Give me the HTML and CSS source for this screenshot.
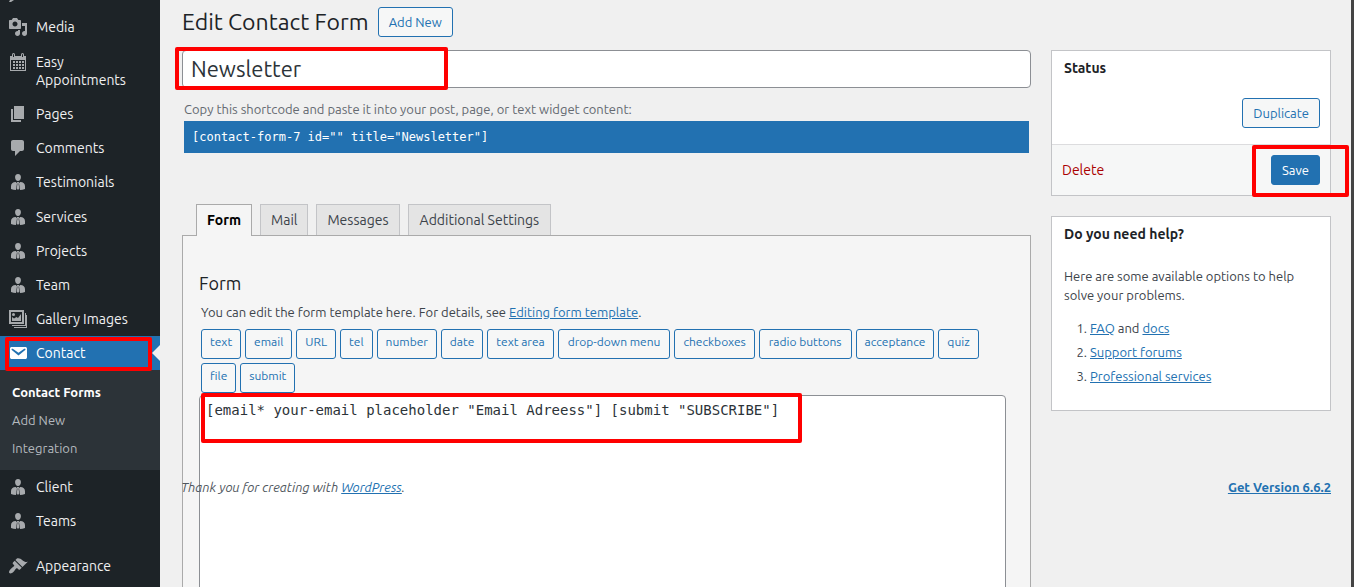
FILE: index.html
```html
<!DOCTYPE html>
<html lang="en">
<head>
<meta charset="utf-8">
<title>Edit Contact Form</title>
<link rel="stylesheet" href="styles.css">
</head>
<body>
<svg class="sprite" aria-hidden="true">
  <symbol id="media" viewBox="0 0 20 20"><path fill-rule="evenodd" d="M13 11V4c0-.55-.45-1-1-1h-1.670L9 1H5L3.670 3H2c-.55 0-1 .45-1 1v7c0 .55.45 1 1 1h10c.55 0 1-.45 1-1zM7 4.500c1.380 0 2.500 1.120 2.500 2.500S8.380 9.500 7 9.500 4.500 8.380 4.500 7 5.620 4.500 7 4.500zM14 6h5v10.500c0 1.380-1.120 2.500-2.500 2.500S14 17.880 14 16.500s1.120-2.500 2.500-2.500c.17 0 .34.02.5.05V9h-3V6zm-4 8.050V13h2v3.500c0 1.380-1.120 2.500-2.500 2.500S7 17.880 7 16.500 8.120 14 9.500 14c.17 0 .34.02.5.050z"/></symbol>
  <symbol id="calendar" viewBox="0 0 20 20"><path fill-rule="evenodd" d="M2 4h2V2.500a1.500 1.500 0 0 1 3 0V4h6V2.500a1.500 1.500 0 0 1 3 0V4h2v15H2zM5 2.200V5h1V2.200zM14 2.200V5h1V2.200zM3 8v10h14V8z"/><path d="M5 9h2v2H5zM8 9h2v2H8zM11 9h2v2h-2zM14 9h2v2h-2zM5 12h2v2H5zM8 12h2v2H8zM11 12h2v2h-2zM14 12h2v2h-2zM5 15h2v2H5zM8 15h2v2H8zM11 15h2v2h-2zM14 15h2v2h-2z"/></symbol>
  <symbol id="page" viewBox="0 0 20 20"><path d="M6 15V2h10v13H6zm-1 1h8v2H3V5h2v11z"/></symbol>
  <symbol id="comment" viewBox="0 0 20 20"><path d="M5 2h9c1.100 0 2 .9 2 2v7c0 1.100-.9 2-2 2h-2l-5 5v-5H5c-1.100 0-2-.9-2-2V4c0-1.100.9-2 2-2z"/></symbol>
  <symbol id="person" viewBox="0 0 20 20"><path d="M10 2c1.900 0 3.100 1.400 2.900 3.500C12.700 7.600 11.700 9 10 9S7.300 7.600 7.100 5.500C6.900 3.400 8.100 2 10 2zM7.800 10 9 11.300 8 17.900c-1.700-.1-3.400-.4-5-1v-2.600C3 11.700 4.600 10 7.800 10zM12.200 10 11 11.300l1 6.600c1.700-.1 3.400-.4 5-1v-2.600c0-2.600-1.600-4.300-4.800-4.300z"/><path d="M9.200 10h1.600l.3 1-.5.800.7 4.700L10 18l-1.300-1.500.7-4.700-.5-.8z"/></symbol>
  <symbol id="gallery" viewBox="0 0 20 20"><path fill-rule="evenodd" d="M1 1h15v14H1zM3 3v10h11V3zM17 4h1v13H4v-1h13zM18 6h1v13H6v-1h12z"/><path d="M4 12V8l2 1.500L8.500 8 10 9l3-4v7z"/><circle cx="5.500" cy="5.500" r="1.500"/></symbol>
  <symbol id="mail" viewBox="0 0 20 20"><path fill-rule="evenodd" d="M3.870 4h13.250C18.370 4 19 4.590 19 5.790v8.420c0 1.190-.63 1.790-1.880 1.790H3.870c-1.250 0-1.880-.6-1.880-1.790V5.790c0-1.200.63-1.790 1.880-1.790zm6.620 8.600 6.740-5.530c.24-.2.43-.66.130-1.070-.29-.41-.82-.42-1.170-.17l-5.700 3.860L4.800 5.830c-.35-.25-.88-.24-1.170.17-.3.410-.11.870.130 1.070z"/></symbol>
  <symbol id="brush" viewBox="0 0 20 20"><path d="M14.480 11.060 7.410 3.990l1.500-1.500c.5-.56 2.300-.47 3.510.32 1.210.8 1.430 1.280 2.910 2.100 1.180.64 2.450 1.260 4.450.85zm-.71.710L6.700 4.700 4.930 6.470c-.39.39-.39 1.020 0 1.410l1.060 1.060c.39.39.39 1.030 0 1.420-.6.6-1.430 1.110-2.210 1.690-.35.26-.7.53-1.010.84C1.430 14.230.4 16.080 1.400 17.070c.99 1 2.840-.03 4.180-1.360.31-.31.58-.66.850-1.020.57-.78 1.080-1.610 1.690-2.210.39-.39 1.020-.39 1.410 0l1.060 1.060c.39.39 1.020.39 1.410 0z"/></symbol>
</svg>
<div class="shell">
  <nav class="sidebar" aria-label="Main menu">
    <svg class="pin-tip" viewBox="0 0 6 2" aria-hidden="true"><path d="M1 0h4L2 2H0z"/></svg>
    <a class="item group-end" href="#"><svg class="icon"><use href="#media"/></svg>Media</a>
    <a class="item" href="#"><svg class="icon"><use href="#calendar"/></svg>Easy Appointments</a>
    <a class="item" href="#"><svg class="icon"><use href="#page"/></svg>Pages</a>
    <a class="item" href="#"><svg class="icon"><use href="#comment"/></svg>Comments</a>
    <a class="item group-end" href="#"><svg class="icon"><use href="#person"/></svg>Testimonials</a>
    <a class="item" href="#"><svg class="icon"><use href="#person"/></svg>Services</a>
    <a class="item" href="#"><svg class="icon"><use href="#person"/></svg>Projects</a>
    <a class="item" href="#"><svg class="icon"><use href="#person"/></svg>Team</a>
    <a class="item" href="#"><svg class="icon"><use href="#gallery"/></svg>Gallery Images</a>
    <a class="item current" href="#"><svg class="icon"><use href="#mail"/></svg>Contact<span class="mark mark-contact"></span></a>
    <div class="submenu">
      <a class="active" href="#">Contact Forms</a>
      <a href="#">Add New</a>
      <a href="#">Integration</a>
    </div>
    <a class="item" href="#"><svg class="icon"><use href="#person"/></svg>Client</a>
    <a class="item" href="#"><svg class="icon"><use href="#person"/></svg>Teams</a>
    <a class="item spaced" href="#"><svg class="icon"><use href="#brush"/></svg>Appearance</a>
  </nav>
  <main class="content">
    <header class="heading">
      <h1>Edit Contact Form</h1>
      <button class="button" type="button">Add New</button>
    </header>
    <div class="columns">
      <section class="editor">
        <div class="title-wrap">
          <input class="title" type="text" aria-label="Form title" value="Newsletter">
          <span class="mark mark-title"></span>
        </div>
        <div class="shortcode">
          <label for="shortcode">Copy this shortcode and paste it into your post, page, or text widget content:</label>
          <input id="shortcode" type="text" readonly value='[contact-form-7 id="" title="Newsletter"]'>
        </div>
        <div class="tabs" role="tablist">
          <button class="tab selected" type="button" role="tab" aria-selected="true">Form</button>
          <button class="tab" type="button" role="tab">Mail</button>
          <button class="tab" type="button" role="tab">Messages</button>
          <button class="tab wide" type="button" role="tab">Additional Settings</button>
        </div>
        <div class="panel">
          <h2>Form</h2>
          <p>You can edit the form template here. For details, see <a href="#">Editing form template</a>.</p>
          <div class="tags">
            <button type="button">text</button>
            <button type="button">email</button>
            <button type="button">URL</button>
            <button type="button">tel</button>
            <button type="button">number</button>
            <button type="button">date</button>
            <button type="button">text area</button>
            <button class="wide" type="button">drop-down menu</button>
            <button type="button">checkboxes</button>
            <button class="wide" type="button">radio buttons</button>
            <button type="button">acceptance</button>
            <button type="button">quiz</button>
            <button type="button">file</button>
            <button type="button">submit</button>
          </div>
          <div class="template">
            <textarea aria-label="Form template" rows="24" spellcheck="false">[email* your-email placeholder "Email Adreess"] [submit "SUBSCRIBE"]</textarea>
            <span class="mark mark-template"></span>
          </div>
        </div>
      </section>
      <aside class="side">
        <section class="box">
          <h3>Status</h3>
          <div class="minor"><button class="button" type="button">Duplicate</button></div>
          <div class="major">
            <a class="delete" href="#">Delete</a>
            <button class="button primary" type="button">Save</button>
            <span class="mark mark-save"></span>
          </div>
        </section>
        <section class="box help">
          <h3>Do you need help?</h3>
          <p>Here are some available options to help solve your problems.</p>
          <ol>
            <li><a href="#">FAQ</a> and <a href="#">docs</a></li>
            <li><a href="#">Support forums</a></li>
            <li><a href="#">Professional services</a></li>
          </ol>
        </section>
      </aside>
    </div>
    <footer class="footer">
      <em>Thank you for creating with <a href="#">WordPress</a>.</em>
      <a class="version" href="#">Get Version 6.6.2</a>
    </footer>
  </main>
</div>
</body>
</html>
```

FILE: styles.css
```css
* { box-sizing: border-box; }

body {
  margin: 0;
  background: #f0f0f0;
  color: #3c434a;
  font: 13px/19px Ubuntu, "Noto Sans", sans-serif;
}

h1, h2, h3, p, ol { margin: 0; }
a { color: #2271b1; }
button, input, textarea { font-family: inherit; }
.sprite { display: none; }

.shell {
  display: flex;
  height: 100vh;
  overflow: hidden;
  border-right: 3px solid #444;
}

/* Sidebar */
.sidebar {
  position: relative;
  flex: 0 0 160px;
  padding-top: 10px;
  background: #1d2327;
}
.pin-tip {
  position: absolute;
  top: 0;
  left: 9px;
  width: 6px;
  height: 2px;
  fill: #a7aaad;
}
.item {
  position: relative;
  display: flex;
  gap: 8px;
  padding: 8px;
  color: #f0f0f1;
  font-size: 14px;
  line-height: 18px;
  text-decoration: none;
}
.icon {
  flex: none;
  width: 20px;
  height: 20px;
  margin: -1px 0;
  fill: #a7aaad;
}
.group-end { margin-bottom: 1px; }
.current { background: #2271b1; color: #fff; }
.current .icon { fill: #fff; }
.current::after {
  content: "";
  position: absolute;
  right: 0;
  top: 9px;
  border: 8px solid transparent;
  border-left: 0;
  border-right-color: #f0f0f0;
}
.spaced { margin-top: 11px; }
.submenu {
  padding: 8px 12px;
  background: #2c3338;
}
.submenu a {
  display: block;
  color: #b4b9be;
  line-height: 28px;
  text-decoration: none;
}
.submenu .active { color: #fff; font-weight: 600; }

/* Highlight frames */
.mark {
  position: absolute;
  border: 4px solid #f00;
  border-radius: 2px;
  pointer-events: none;
}
.mark-contact { inset: 1px 8px -1px 5px; }
.mark-title { top: -3px; left: -7px; width: 273px; height: 43px; }
.mark-template { top: -2px; left: 2px; width: 601px; height: 50px; }
.mark-save { inset: 0 -19px -2px auto; width: 97px; }

/* Content */
.content {
  position: relative;
  flex: 1;
  min-width: 0;
  padding: 7px 20px 0 22px;
}
.heading {
  display: flex;
  align-items: center;
  gap: 9px;
  margin-bottom: 13px;
}
h1 {
  color: #1d2327;
  font-size: 23px;
  font-weight: 400;
  line-height: 30px;
}
.button {
  height: 30px;
  padding: 0 10px;
  border: 1px solid #2271b1;
  border-radius: 3px;
  background: #f6f7f7;
  color: #2271b1;
  font-size: 13px;
}
.primary { background: #2271b1; color: #fff; }
.columns { display: flex; gap: 20px; }
.editor { flex: 1; min-width: 0; }
.side { flex: 0 0 280px; }

.title-wrap { position: relative; }
.title {
  display: block;
  width: 100%;
  height: 38px;
  padding: 0 8px 2px;
  border: 1px solid #8c8f94;
  border-radius: 4px;
  background: #fff;
  color: #2c3338;
  font-size: 22px;
}
.shortcode { padding: 12px 2px 51px; }
.shortcode label { display: block; color: #646970; }
.shortcode input {
  display: block;
  width: 100%;
  height: 32px;
  margin-top: 2px;
  padding: 0 8px;
  border: 0;
  background: #2271b1;
  color: #fff;
  font: 12px "DejaVu Sans Mono", monospace;
}

.tabs {
  position: relative;
  display: flex;
  gap: 8px;
  padding-left: 14px;
}
.tab {
  height: 31px;
  padding: 0 10px;
  border: 1px solid #c3c4c7;
  border-bottom: 0;
  background: #e4e4e4;
  color: #3c434a;
  font-size: 14px;
}
.selected {
  height: 32px;
  margin-bottom: -1px;
  padding-bottom: 2px;
  border-color: #aaa;
  background: #f5f5f5;
  color: #000;
  font-weight: 700;
}
.panel {
  padding: 35px 24px 24px 16px;
  border: 1px solid #aaa;
  background: #f5f5f5;
}
h2 {
  color: #1d2327;
  font-size: 18px;
  font-weight: 400;
  line-height: 24px;
}
.panel p { margin: 8px 2px 7px; }
.tags {
  display: flex;
  flex-wrap: wrap;
  gap: 4px;
  padding: 0 2px;
}
.tags button {
  height: 30px;
  padding: 0 8px 6px;
  border: 1px solid #2271b1;
  border-radius: 3px;
  background: #f6f7f7;
  color: #2271b1;
  font-size: 12px;
}
.tabs .wide { padding-inline: 11px; }
.tags .wide { padding-inline: 9px; }
.template { position: relative; margin-top: 2px; }
textarea {
  display: block;
  width: 100%;
  padding: 4px 6px;
  border: 1px solid #8c8f94;
  border-radius: 4px;
  background: #fff;
  color: #2c3338;
  font: 14px/20px "DejaVu Sans Mono", monospace;
  resize: none;
}

/* Side boxes */
.box {
  margin-bottom: 20px;
  border: 1px solid #c3c4c7;
  background: #fff;
}
h3 {
  padding: 8px 12px;
  color: #1d2327;
  font-size: 14px;
  line-height: 19px;
}
.minor { padding: 12px 10px 16px; text-align: right; }
.major {
  position: relative;
  display: flex;
  align-items: center;
  justify-content: space-between;
  padding: 10px;
  border-top: 1px solid #dcdcde;
  background: #f6f7f7;
}
.delete { color: #a00; font-size: 14px; text-decoration: none; }
.help p { padding: 15px 12px 14px; }
.help ol { padding: 0 12px 19px 38px; }
.help li { margin-bottom: 5px; }

.footer {
  position: absolute;
  top: 478px;
  left: 21px;
  right: 20px;
  display: flex;
  justify-content: space-between;
  color: #50575e;
}
.version { font-weight: 600; }
```
